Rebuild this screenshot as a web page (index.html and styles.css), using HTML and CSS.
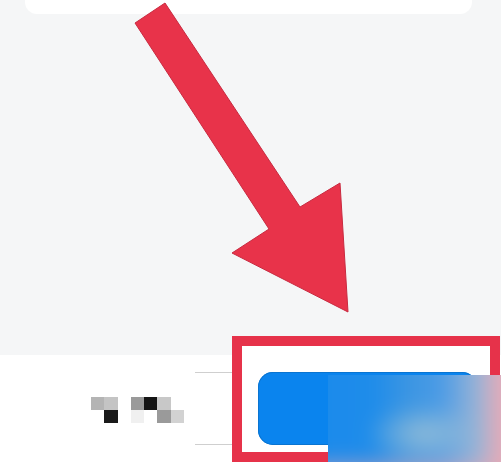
FILE: index.html
```html
<!DOCTYPE html>
<html lang="zh">
<head>
<meta charset="utf-8">
<title>Screenshot</title>
<link rel="stylesheet" href="styles.css">
</head>
<body>
<div class="page">
  <div class="top-card"></div>
  <div class="spacer"></div>
  <div class="bottom-bar">
    <div class="mosaic" aria-label="censored text">
      <span class="c1"></span><span class="c2"></span><span></span><span class="c4"></span><span class="c5"></span><span class="c6"></span><span></span>
      <span></span><span class="k"></span><span></span><span class="l"></span><span></span><span class="g"></span><span class="m"></span>
    </div>
    <div class="ghost"></div>
    <div class="primary-btn"></div>
  </div>
  <div class="highlight"></div>
  <div class="blur-box"><div class="blur-inner"></div></div>
  <svg class="arrow" width="501" height="462" viewBox="0 0 501 462">
    <polygon points="165,3 300,207 340,183 348,312 232,253 269,229 135,23" fill="#e8334a" stroke="#c92a40" stroke-width="1" stroke-linejoin="miter"/>
  </svg>
</div>
</body>
</html>
```

FILE: styles.css
```css
html, body {
  margin: 0;
  padding: 0;
}
body {
  background: #f5f6f7;
  font-family: "Noto Sans", "Noto Sans CJK SC", sans-serif;
}
.page {
  position: relative;
  width: 501px;
  height: 462px;
  overflow: hidden;
  display: flex;
  flex-direction: column;
}
.top-card {
  height: 14px;
  margin: 0 29px 0 25px;
  background: #ffffff;
  border-radius: 0 0 12px 12px;
}
.spacer {
  flex: 1;
}
.bottom-bar {
  height: 107px;
  background: #ffffff;
  display: flex;
  align-items: center;
  padding-left: 91px;
}
.mosaic {
  width: 93px;
  display: grid;
  grid-template-columns: repeat(7, 1fr);
  grid-template-rows: 13px 13px;
  margin-top: 3px;
  filter: blur(0.4px);
}
.mosaic .c1 { background: #b4b4b4; }
.mosaic .c2 { background: #c4c4c4; }
.mosaic .c4 { background: #9a9a9a; }
.mosaic .c5 { background: #141414; }
.mosaic .c6 { background: #c8c8c8; }
.mosaic .k { background: #1a1a1a; }
.mosaic .l { background: #f0f0f0; }
.mosaic .g { background: #9a9a9a; }
.mosaic .m { background: #d2d2d2; }
.ghost {
  width: 38px;
  height: 71px;
  margin-left: 11px;
  border-top: 1px solid #cfcfcf;
  border-bottom: 1px solid #cfcfcf;
}
.primary-btn {
  position: relative;
  z-index: 1;
  width: 219px;
  height: 73px;
  margin-left: 25px;
  background: #0a84ee;
  border-radius: 15px;
  box-shadow: inset 0 0 0 1px #0a74d0;
}
.highlight {
  position: absolute;
  left: 232px;
  top: 336px;
  width: 268px;
  height: 126px;
  box-sizing: border-box;
  border: 10px solid #e6324a;
  background: #ffffff;
  z-index: 0;
}
.blur-box {
  position: absolute;
  left: 328px;
  top: 375px;
  width: 173px;
  height: 87px;
  overflow: hidden;
  z-index: 2;
}
.blur-inner {
  position: absolute;
  inset: -20px;
  filter: blur(9px);
  background:
    linear-gradient(to bottom, rgba(232,168,180,0) 0%, rgba(232,168,180,0) 78%, rgba(232,170,182,0.9) 100%),
    radial-gradient(ellipse 60px 30px at 55% 62%, rgba(150,190,215,0.95), rgba(150,190,215,0) 100%),
    linear-gradient(to right, #1a8aec 0%, #1e8cea 30%, #3d96e2 48%, #4a9be6 62%, #9ab4d6 80%, #e4aab8 90%, #eab0b8 100%);
}
.arrow {
  position: absolute;
  left: 0;
  top: 0;
  z-index: 3;
  pointer-events: none;
}
```
